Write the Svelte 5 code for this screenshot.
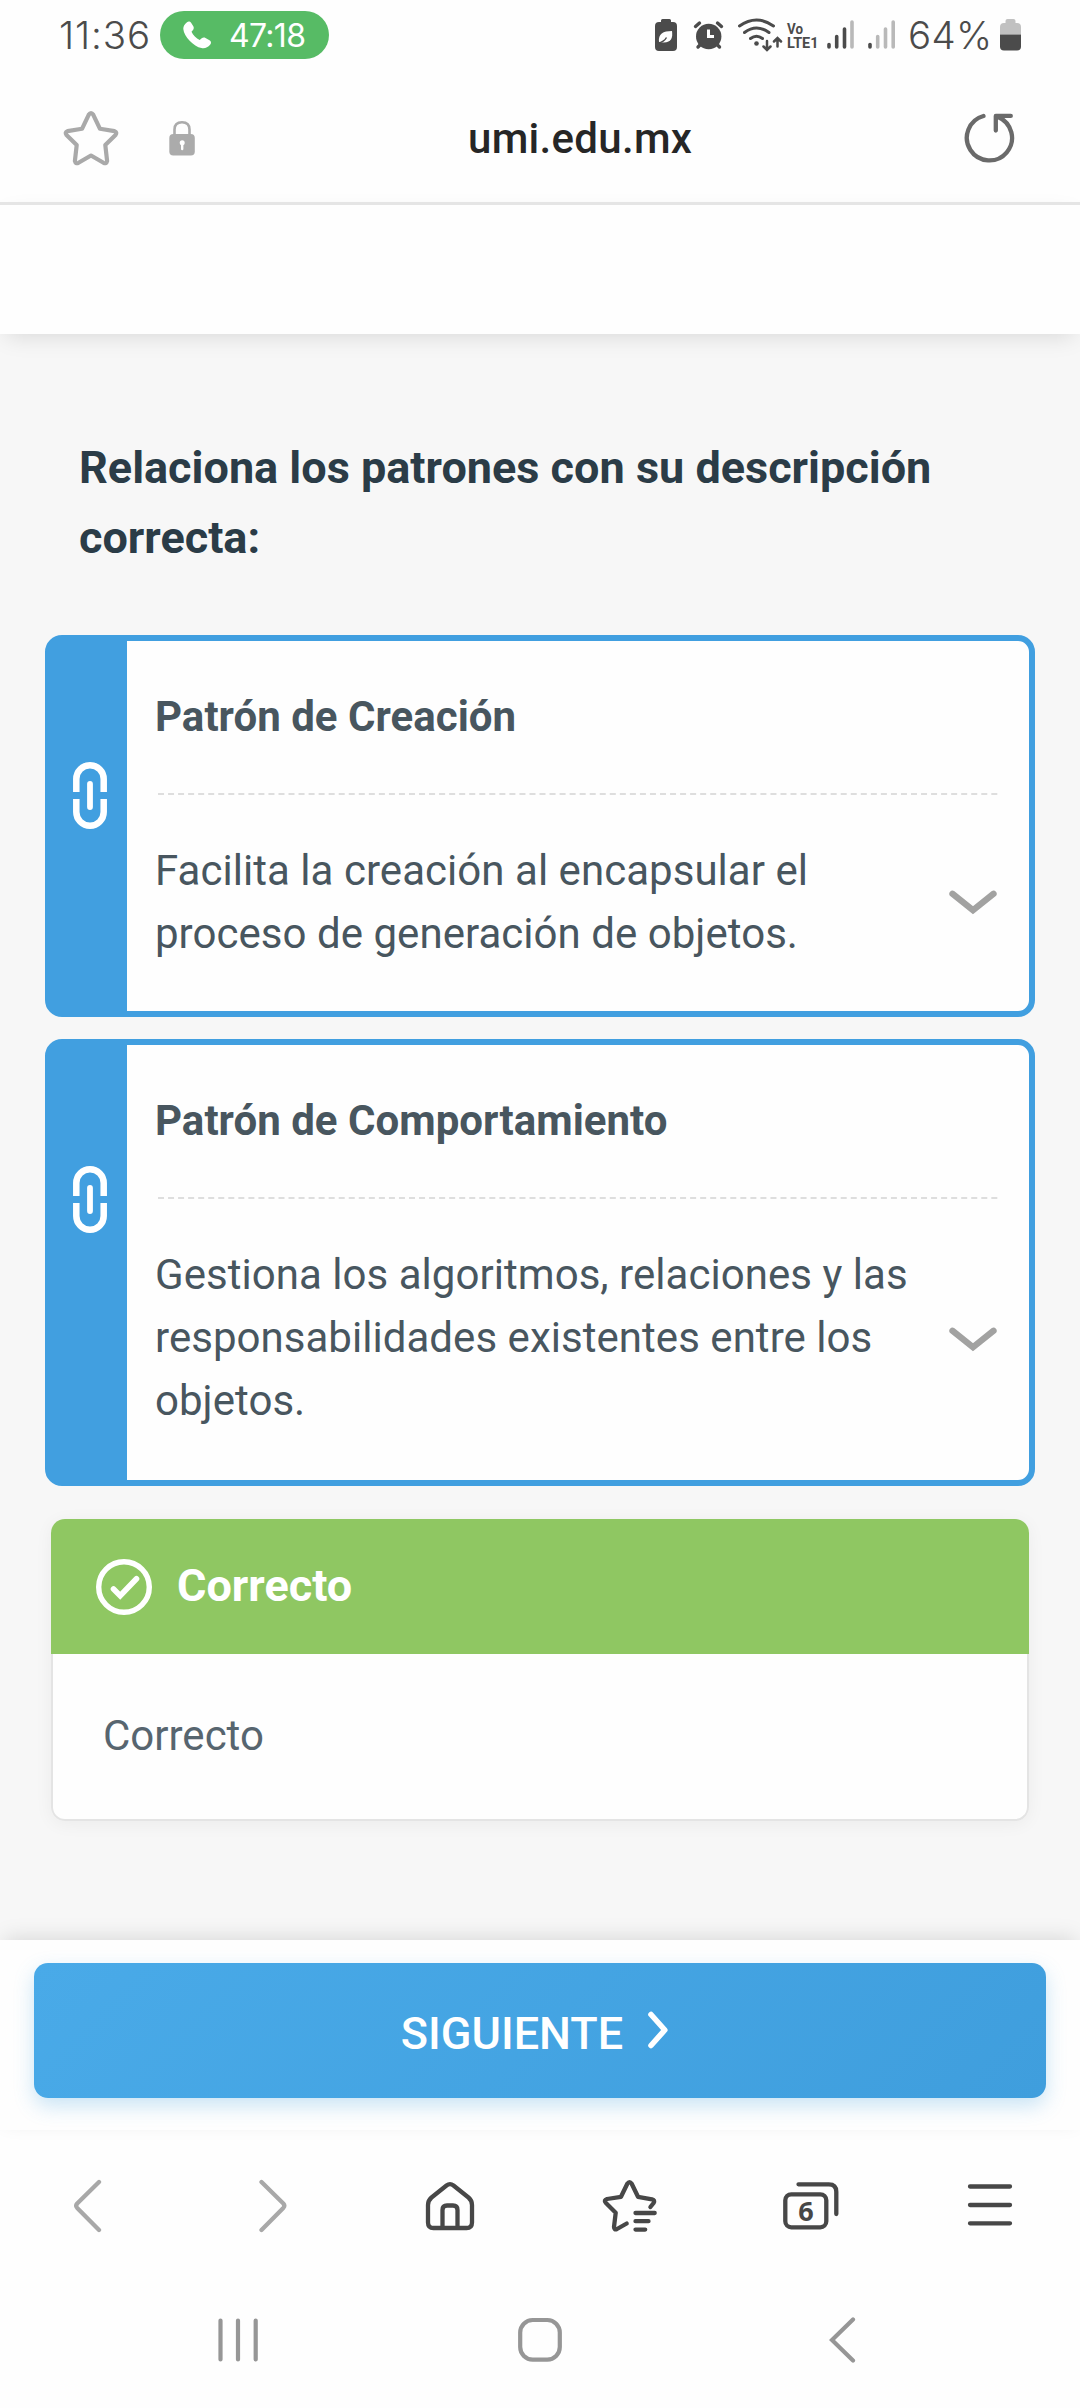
<script>
  const cards = [
    {
      title: 'Patrón de Creación',
      lines: ['Facilita la creación al encapsular el', 'proceso de generación de objetos.']
    },
    {
      title: 'Patrón de Comportamiento',
      lines: [
        'Gestiona los algoritmos, relaciones y las',
        'responsabilidades existentes entre los',
        'objetos.'
      ]
    }
  ];
</script>

<div class="screen">
  <header class="status">
    <span class="clock">11:36</span>
    <div class="call">
      <svg class="phone" width="28" height="28" viewBox="0 0 28 28">
        <path d="M4 1.2C5.4.1 7.2.4 8.1 1.800l2.200 3.500c.8 1.300.5 2.900-.5 4L8.500 10.700c1.500 3.200 4.700 6.500 8.200 8.300l2-1.700c1.100-.9 2.600-1 3.800-.3l4 2.300c1.700 1 2 3 .6 4.500-2.300 2.700-5.200 4-8.600 3.300C10.500 25.500 1 15.600.3 8 .2 5.300 1.500 3 4 1.200z" fill="#fff" />
      </svg>
      <span>47:18</span>
    </div>

    <svg class="indicators" width="244" height="36" viewBox="652 17 244 36">
      <g fill="#4b4b4b">
        <path d="M661 22v-1.500q0-1.500 1.500-1.500h7q1.500 0 1.500 1.500V22h2q4 0 4 4v21q0 4-4 4h-14q-4 0-4-4V26q0-4 4-4z" />
        <path d="M659 42c-1-8 4-11 13-11 1 8-1 13-13 11z" fill="#fff" />
        <path d="M658 43q6-1 8.500-5.500" stroke="#4b4b4b" stroke-width="1.500" fill="none" />
        <circle cx="708.700" cy="36.500" r="12.700" />
      </g>
      <g fill="none" stroke="#4b4b4b" stroke-linecap="round">
        <path d="M695.500 26.500l4-3.500M721.500 26.500l-4-3.500M698 47l3-3M719.500 47l-3-3" stroke-width="3.400" />
        <path d="M708.500 29.500v7h5.500" stroke="#fff" stroke-width="3" stroke-linecap="butt" />
        <path d="M739.500 26q17-12 34 0M744.500 32.500q12-9 24.500 0M750.500 38.500q6-4.500 12 0" stroke-width="3" />
        <path d="M767 41v8M763.500 46.500l3.500 3.500 3.500-3.500M777.500 46.500v-8M774 41.500l3.500-3.500 3.500 3.500" stroke-width="2.500" />
        <path d="M829 44.500v2.500M836.700 36.500V47M844.500 29V47" stroke-width="3.600" />
        <path d="M852 22V47M877.700 36.500V47M885.500 29V47M893.200 22V47" stroke="#b9b9b9" stroke-width="3.600" />
        <path d="M870 44.500v2.500" stroke-width="3.600" />
      </g>
      <circle cx="756.500" cy="43.500" r="2.300" fill="#4b4b4b" />
      <text class="volte" x="787" y="34.300" textLength="16" lengthAdjust="spacingAndGlyphs">Vo</text>
      <text class="volte" x="787" y="48" textLength="31.500" lengthAdjust="spacingAndGlyphs">LTE1</text>
    </svg>
    <span class="percent">64%</span>
    <svg class="battery" width="21" height="32" viewBox="0 0 21 32">
      <path d="M5.500 4V2q0-2 2-2h6q2 0 2 2v2H17q4 0 4 4v7.500H0V8q0-4 4-4z" fill="#c1c1c1" />
      <path d="M0 15.500h21V27.500q0 4-4 4H4q-4 0-4-4z" fill="#4b4b4b" />
    </svg>
  </header>

  <nav class="address">
    <svg width="56" height="56" viewBox="63 110 56 56" fill="none" stroke="#a9a9a9" stroke-width="4.200" stroke-linejoin="round">
      <path d="M88.700 114.800q2.300-3.300 4.600 0l6.700 14 14.500 2.300q3 1.200 1 4l-10.200 10 1.800 16q-.7 3-3.600 1.700L91 155.500l-12.500 7.300q-2.900 1.300-3.600-1.700l1.800-16-10.200-10q-2-2.800 1-4l14.500-2.300z" />
    </svg>
    <svg class="lock" width="26" height="37" viewBox="169 120 26 37">
      <path d="M174.500 137v-7.500q0-7.300 7.500-7.300t7.500 7.300v7.500" fill="none" stroke="#ababab" stroke-width="2.600" />
      <rect x="169.300" y="134" width="25.500" height="21.500" rx="4" fill="#ababab" />
      <circle cx="182.200" cy="142.800" r="2.500" fill="#fff" />
      <path d="M182.200 143v6" stroke="#fff" stroke-width="2.400" stroke-linecap="round" />
    </svg>
    <span class="host">umi.edu.mx</span>
    <svg class="reload" width="54" height="54" viewBox="962 111 54 54" fill="none" stroke="#6a6a6a" stroke-width="4.300" stroke-linecap="round" stroke-linejoin="round">
      <path d="M983.500 116A22.600 22.600 0 1 0 998 116.900M995.800 130.500v-14.600h15" />
    </svg>
  </nav>

  <div class="site-bar"></div>

  <main>
    <h1>Relaciona los patrones con su descripción<br />correcta:</h1>

    {#each cards as card}
      <section class="pair">
        <div class="link">
          <svg width="34" height="67" viewBox="0 0 34 67" fill="none" stroke="#fff" stroke-width="6.500">
            <path d="M3.300 30V17a13.700 13.700 0 0 1 27.400 0V30M3.300 37V50a13.700 13.700 0 0 0 27.400 0V37" />
            <path d="M17 22v23" stroke-width="5.800" stroke-linecap="round" />
          </svg>
        </div>
        <div class="content">
          <h2>{card.title}</h2>
          <svg class="dashes" width="840" height="2" viewBox="0 0 840 2">
            <path d="M0 1h840" stroke="#dedede" stroke-width="2" stroke-dasharray="6 4.040" />
          </svg>
          <div class="answer">
            <p>
              {#each card.lines as line}
                <span>{line}</span>
              {/each}
            </p>
            <svg class="chevron" width="48" height="25" viewBox="0 0 48 25" fill="none" stroke="#a2a2a1" stroke-width="6.300" stroke-linecap="round">
              <path d="M3.500 3.800L24 20.300 44.500 3.800" />
            </svg>
          </div>
        </div>
      </section>
    {/each}

    <section class="feedback">
      <div class="result">
        <svg width="56" height="56" viewBox="0 0 56 56" fill="none" stroke="#fff">
          <circle cx="28" cy="28" r="25.300" stroke-width="5.400" />
          <path d="M17.500 30l6.700 6.800L40.500 19.800" stroke-width="5.600" stroke-linecap="round" />
        </svg>
        <strong>Correcto</strong>
      </div>
      <div class="detail">Correcto</div>
    </section>
  </main>

  <footer>
    <button>
      <span>SIGUIENTE</span>
      <svg width="20" height="38" viewBox="0 0 20 38" fill="none" stroke="#fff" stroke-width="5.600" stroke-linecap="round" stroke-linejoin="round">
        <path d="M3 3.500l13.800 15.500L3 34.500" />
      </svg>
    </button>
  </footer>

  <nav class="tools">
    <svg width="28" height="54" viewBox="74 2179 28 54" stroke="#a8a8a8">
      <path d="M99 2182L77.200 2203.500q-2 2.200 0 4.400L99 2230" />
    </svg>
    <svg width="28" height="54" viewBox="259 2179 28 54" stroke="#a8a8a8">
      <path d="M261.500 2182l21.800 21.500q2 2.200 0 4.400L261.500 2230" />
    </svg>
    <svg width="50" height="54" viewBox="425 2179 50 54">
      <path d="M446.500 2185.500q3.500-2.800 7 0l15 12q3.500 3 3.500 7.500v17.500q0 5.500-5.500 5.500h-33q-5.500 0-5.500-5.500V2205q0-4.500 3.500-7.500zM442.500 2227v-17q0-4.500 4.500-4.500h6q4.500 0 4.500 4.500v17" />
    </svg>
    <svg width="56" height="54" viewBox="602 2179 56 54">
      <path d="M626.700 2223.500l-9.700 5.500q-2.900 1.300-3-2l1.700-14.300-10-10q-2.200-2.600 1.300-3.700l14-2.200 6.300-13q2.200-3.300 4.400 0l6.300 13 14 2.500q3.300 1 1.600 3.700l-3.200 4M635.500 2213h19.200M635.500 2221.200h13M635.500 2229.600h9.700" />
    </svg>
    <svg width="56" height="54" viewBox="783 2179 56 54">
      <rect x="785.300" y="2194.300" width="41" height="33" rx="6" />
      <path d="M798.500 2184.300h30.300q7.500 0 7.500 7.500v22.200" />
      <text x="806" y="2220.500" text-anchor="middle">6</text>
    </svg>
    <svg width="46" height="54" viewBox="967 2179 46 54">
      <path d="M970 2186.500h40M970 2205h40M970 2223.300h40" />
    </svg>
  </nav>

  <nav class="system">
    <svg width="42" height="46" viewBox="217 2316 42 46">
      <path d="M220.500 2320.500v39M238 2320.500v39M255.700 2320.500v39" />
    </svg>
    <svg width="46" height="46" viewBox="517 2316 46 46">
      <rect x="520.200" y="2320" width="39.600" height="39.600" rx="12.500" />
    </svg>
    <svg width="27" height="48" viewBox="829 2316 27 48">
      <path d="M853 2319.500L832 2340l21 20.500" />
    </svg>
  </nav>
</div>

<style>
  :global(body) {
    background: #fefefe;
  }
  .screen {
    width: 1080px;
    height: 2408px;
    overflow: hidden;
    display: flex;
    flex-direction: column;
    background: #fefefe;
    font-family: Roboto, 'Liberation Sans', sans-serif;
  }
  .screen > * {
    flex: none;
    box-sizing: border-box;
  }
  svg {
    display: block;
    flex: none;
  }
  h1,
  h2,
  p {
    margin: 0;
  }

  .status {
    height: 70px;
    padding: 0 59px 0 59px;
    display: flex;
    align-items: center;
    font-family: Inter, Roboto, sans-serif;
    color: #4b4b4b;
  }
  .clock {
    width: 101px;
    font-size: 38.500px;
    font-weight: 300;
    letter-spacing: .9px;
    white-space: nowrap;
  }
  .call {
    width: 169px;
    height: 48px;
    border-radius: 24px;
    box-sizing: border-box;
    padding-left: 23px;
    display: flex;
    align-items: center;
    gap: 18px;
    background: #57bb65;
    color: #fff;
    font-size: 32px;
    letter-spacing: -.7px;
  }
  .indicators {
    margin-left: auto;
  }
  .volte {
    font: 700 15px Roboto, sans-serif;
    fill: #4b4b4b;
  }
  .percent {
    width: 92px;
    margin-left: 12px;
    font-size: 38.500px;
    font-weight: 300;
    letter-spacing: .3px;
    white-space: nowrap;
  }

  .address {
    height: 132px;
    padding: 4px 64px 0 63px;
    display: flex;
    align-items: center;
  }
  .lock {
    margin-left: 50px;
  }
  .host {
    margin-left: 273px;
    font-size: 42px;
    font-weight: 500;
    letter-spacing: .3px;
    color: #262626;
    white-space: nowrap;
  }
  .reload {
    margin-left: auto;
  }

  .site-bar {
    height: 132px;
    border-top: 3px solid #e5e5e5;
    background: #fefefe;
    position: relative;
    z-index: 1;
    box-shadow: 0 8px 22px -6px rgba(0, 0, 0, .13);
  }

  main {
    height: 1606px;
    padding: 99px 45px 0;
    background: #f7f7f7;
  }
  h1 {
    height: 202px;
    box-sizing: border-box;
    padding-left: 34px;
    font-size: 45px;
    line-height: 70px;
    font-weight: 700;
    color: #2b3c47;
    white-space: nowrap;
  }
  .pair {
    display: flex;
    margin-bottom: 22px;
    border: 6px solid #419fe0;
    border-radius: 17px;
    background: #fefefe;
  }
  .link {
    width: 76px;
    box-sizing: border-box;
    padding: 121px 0 0 22px;
    background: #419fe0;
  }
  .content {
    flex: 1;
    padding: 44px 0 46px 28px;
  }
  .pair + .pair .content {
    padding-bottom: 48px;
  }
  h2 {
    font-size: 42px;
    line-height: 63px;
    font-weight: 700;
    letter-spacing: .03px;
    color: #48565f;
  }
  .dashes {
    margin: 45px 0 44px 3px;
  }
  .answer {
    display: flex;
    align-items: center;
    justify-content: space-between;
    padding-right: 32px;
  }
  p {
    font-size: 42px;
    line-height: 63px;
    letter-spacing: .04px;
    color: #48565f;
    white-space: nowrap;
  }
  p span {
    display: block;
  }
  .pair + .pair .chevron {
    margin-top: 3px;
  }

  .feedback {
    width: 978px;
    margin: 33px 0 0 6px;
    border-radius: 14px;
    background: #fefefe;
    box-shadow: 0 3px 18px rgba(0, 0, 0, .05);
  }
  .result {
    height: 135px;
    display: flex;
    align-items: center;
    gap: 25px;
    padding-left: 45px;
    border-radius: 14px 14px 0 0;
    background: #8fc762;
    color: #fff;
    font-size: 45px;
  }
  .result strong {
    margin-top: -2px;
  }
  .detail {
    height: 167px;
    box-sizing: border-box;
    padding-left: 50px;
    border: 2px solid #e4e4e4;
    border-top: 0;
    border-radius: 0 0 14px 14px;
    line-height: 164px;
    font-size: 42px;
    color: #57656f;
  }

  footer {
    height: 190px;
    padding: 23px 34px 0;
    background: #fefefe;
    box-shadow: 0 -6px 20px -4px rgba(0, 0, 0, .13);
  }
  button {
    width: 1012px;
    height: 135px;
    border: 0;
    border-radius: 14px;
    padding: 5px 11px 0 0;
    display: flex;
    align-items: center;
    justify-content: center;
    gap: 25px;
    background: linear-gradient(135deg, #49aae8, #3f9edd);
    box-shadow: 0 8px 20px rgba(65, 160, 224, .28);
    color: #fff;
    font: 500 45px Roboto, sans-serif;
  }
  button svg {
    margin-top: -6px;
  }

  .tools {
    height: 152px;
    padding: 49px 0 0 74px;
    display: grid;
    grid-template-columns: 185px 166px 177px 181px 184px 46px;
    align-items: start;
  }
  .tools svg {
    fill: none;
    stroke-width: 4.300px;
    stroke-linecap: round;
    stroke-linejoin: round;
  }
  .tools svg:not([stroke]) {
    stroke: #474747;
  }
  .tools text {
    font: 700 27px 'Open Sans', sans-serif;
    fill: #474747;
    stroke: none;
  }

  .system {
    height: 126px;
    padding: 34px 0 0 217px;
    display: grid;
    grid-template-columns: 300px 312px 27px;
    align-items: start;
  }
  .system svg {
    fill: none;
    stroke: #969696;
    stroke-width: 4.200px;
    stroke-linecap: round;
  }
</style>
